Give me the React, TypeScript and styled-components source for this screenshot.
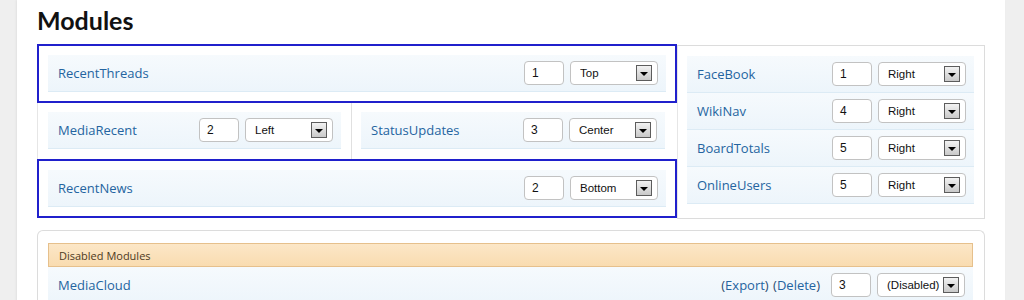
import React from 'react'
import styled, { createGlobalStyle } from 'styled-components'

const GlobalStyle = createGlobalStyle`
  html, body {
    margin: 0;
    padding: 0;
    background: #efefef;
  }
  body {
    font-family: "Open Sans", "DejaVu Sans", sans-serif;
  }
`

const Page = styled.div`
  margin-left: 17px;
  width: 988px;
  min-height: 300px;
  background: #fff;
  box-shadow: -1px 0 2px rgba(0, 0, 0, 0.06);
  padding: 3px 20px 0 20px;
  box-sizing: border-box;
`

const Title = styled.h1`
  margin: 0 0 6px 0;
  font-family: "Lato", "Open Sans", sans-serif;
  font-size: 25px;
  line-height: 35px;
  font-weight: 700;
  color: #111;
`

const Layout = styled.div`
  display: flex;
  align-items: stretch;
`

const LeftColumn = styled.div`
  width: 640px;
  display: flex;
  flex-direction: column;
`

const Zone = styled.div<{ $highlighted?: boolean }>`
  border: 2px solid ${p => (p.$highlighted ? '#2020cc' : 'transparent')};
  padding: 9px 9px 9px 9px;
`

const SplitZone = styled.div`
  display: flex;
  border-left: 1px solid #e6e6e6;
`

const SplitCell = styled.div<{ $divider?: boolean }>`
  padding: 9px 10px 10px 10px;
  ${p =>
    p.$divider
      ? 'flex: 1; border-left: 1px solid #e0e0e0; padding: 9px 12px 10px 9px;'
      : 'width: 313px; box-sizing: border-box;'}
`

const RightPanel = styled.div`
  width: 308px;
  box-sizing: border-box;
  margin-top: 1px;
  border: 1px solid #dcdcdc;
  border-left-color: #e6e6e6;
  padding: 10px 10px 14px 9px;
`

const Row = styled.div`
  display: flex;
  align-items: center;
  height: 36px;
  border-bottom: 1px solid #dcebf5;
  background: linear-gradient(to bottom, #f6fafd, #edf5fb);
  padding: 0 8px 0 10px;
`

const Name = styled.a`
  flex: 1;
  color: #2464a0;
  font-size: 13px;
  text-decoration: none;
`

const OrderInput = styled.div`
  width: 40px;
  height: 24px;
  box-sizing: border-box;
  border: 1px solid #c2c2c2;
  border-radius: 4px;
  background: #fff;
  padding-left: 7px;
  display: flex;
  align-items: center;
  font-family: "Liberation Sans", Arial, sans-serif;
  font-size: 12px;
  color: #111;
  margin-right: 6px;
`

const Select = styled.div`
  width: 88px;
  height: 24px;
  box-sizing: border-box;
  border: 1px solid #c2c2c2;
  border-radius: 4px;
  background: #fff;
  padding: 0 5px 0 9px;
  display: flex;
  align-items: center;
  font-family: "Liberation Sans", Arial, sans-serif;
  font-size: 11.5px;
  color: #111;
`

const SelectValue = styled.span`
  flex: 1;
  white-space: nowrap;
  overflow: hidden;
  margin-right: 2px;
`

const SelectArrow = styled.span`
  width: 16px;
  height: 16px;
  flex: none;
  box-sizing: border-box;
  border: 1px solid #5c5c5c;
  background: linear-gradient(to bottom, #f2f2f2, #c9c9c9);
  display: flex;
  align-items: center;
  justify-content: center;

  &::after {
    content: '';
    border-left: 4px solid transparent;
    border-right: 4px solid transparent;
    border-top: 4px solid #000;
    margin-top: 1px;
  }
`

const DisabledPanel = styled.div`
  margin-top: 11px;
  border: 1px solid #dcdcdc;
  border-bottom: none;
  border-radius: 6px 6px 0 0;
  padding: 12px 11px 0 10px;
`

const SectionHeader = styled.div`
  height: 24px;
  box-sizing: border-box;
  border: 1px solid #e6c08c;
  background: linear-gradient(to bottom, #fce7c7, #f9dcb0);
  padding-left: 10px;
  display: flex;
  align-items: center;
  font-size: 11px;
  color: #4e3a1e;
`

const Actions = styled.span`
  color: #2b4c70;
  font-size: 13px;
  margin-right: 11px;
  word-spacing: 1px;
`

const ActionLink = styled.a`
  color: #2464a0;
  text-decoration: none;
`

interface ModuleRowProps {
  name: string
  order: number
  position: string
}

const ModuleRow: React.FC<ModuleRowProps> = ({ name, order, position }) => (
  <Row>
    <Name>{name}</Name>
    <OrderInput>{order}</OrderInput>
    <Select>
      <SelectValue>{position}</SelectValue>
      <SelectArrow />
    </Select>
  </Row>
)

const rightModules = [
  { name: 'FaceBook', order: 1, position: 'Right' },
  { name: 'WikiNav', order: 4, position: 'Right' },
  { name: 'BoardTotals', order: 5, position: 'Right' },
  { name: 'OnlineUsers', order: 5, position: 'Right' },
]

export default function App() {
  return (
    <>
      <GlobalStyle />
      <Page>
        <Title>Modules</Title>
        <Layout>
          <LeftColumn>
            <Zone $highlighted>
              <ModuleRow name="RecentThreads" order={1} position="Top" />
            </Zone>
            <SplitZone>
              <SplitCell>
                <ModuleRow name="MediaRecent" order={2} position="Left" />
              </SplitCell>
              <SplitCell $divider>
                <ModuleRow name="StatusUpdates" order={3} position="Center" />
              </SplitCell>
            </SplitZone>
            <Zone $highlighted>
              <ModuleRow name="RecentNews" order={2} position="Bottom" />
            </Zone>
          </LeftColumn>
          <RightPanel>
            {rightModules.map(m => (
              <ModuleRow key={m.name} {...m} />
            ))}
          </RightPanel>
        </Layout>
        <DisabledPanel>
          <SectionHeader>Disabled Modules</SectionHeader>
          <Row>
            <Name>MediaCloud</Name>
            <Actions>
              (<ActionLink>Export</ActionLink>) (<ActionLink>Delete</ActionLink>)
            </Actions>
            <OrderInput>3</OrderInput>
            <Select>
              <SelectValue>(Disabled)</SelectValue>
              <SelectArrow />
            </Select>
          </Row>
        </DisabledPanel>
      </Page>
    </>
  )
}
